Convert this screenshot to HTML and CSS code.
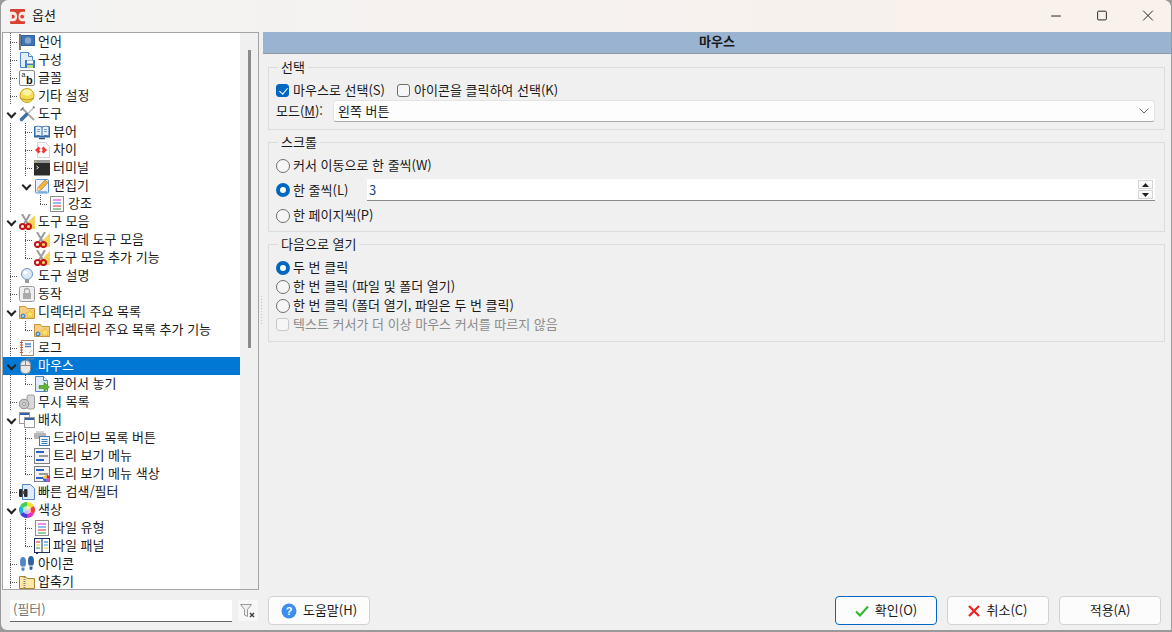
FILE: index.html
```html
<!DOCTYPE html>
<html lang="ko">
<head>
    <meta charset="UTF-8">
    <meta name="viewport" content="width=device-width, initial-scale=1.0">
    <title>옵션</title>
    <link rel="stylesheet" href="styles.css">
</head>
<body>
    <!-- Icon set for the tree, all 16x16 -->
    <svg class="defs" width="0" height="0">
        <symbol id="flag" viewBox="0 0 16 16"><rect x="0" y="0" width="2" height="16" fill="#777"/><rect x="2" y="1" width="14" height="11" fill="#2f62a3"/><rect x="3" y="2" width="12" height="9" fill="#3f74b5"/><circle cx="9" cy="6.500" r="3.200" fill="#86a9d2"/></symbol>
        <symbol id="config" viewBox="0 0 16 16"><path d="M1.500.5h8l4 4v11h-12z" fill="#e4eefa" stroke="#4f86c6"/><path d="M9.500.5v4h4" fill="#fff" stroke="#4f86c6"/><rect x="6" y="8" width="10" height="8" fill="#3f7cc0"/><rect x="8" y="8.500" width="6" height="3" fill="#fff"/><rect x="8" y="13" width="6" height="3" fill="#b9e07f"/></symbol>
        <symbol id="helmet" viewBox="0 0 16 16"><circle cx="8" cy="7.500" r="7" fill="#f6dc50" stroke="#c2a422"/><ellipse cx="8" cy="4.500" rx="4.500" ry="3" fill="#fdf3a6"/><path d="M1 10.500q7 3 14 0" fill="none" stroke="#b89a1e"/></symbol>
        <symbol id="tools" viewBox="0 0 16 16"><path d="M3 2l12 12" stroke="#a6a6a6" stroke-width="2"/><path d="M1 4l1 1 3-3-1-1z" fill="#777"/><path d="M15.500 1l-7 7" stroke="#bcbcbc" stroke-width="1.500"/><path d="M14 .5l1.500 1.500" stroke="#777" stroke-width="1.500"/><path d="M7.500 8.500l-5 5" stroke="#3d6ea8" stroke-width="3.500" stroke-linecap="round"/></symbol>
        <symbol id="book" viewBox="0 0 16 16"><path d="M0 2.500q4-1.500 8 0q4-1.500 8 0v11h-16z" fill="#2f6aa8"/><path d="M1.500 3q3.500-1 6 .5v8.500q-2.500-1.500-6-.5zM14.500 3q-3.500-1-6 .5v8.500q2.500-1.500 6-.5z" fill="#e9f1f8"/><path d="M3 5.500h3M3 7.500h3M10 5.500h3M10 7.500h3" stroke="#7e9cbc"/><path d="M5 14.500h6" stroke="#244f80" stroke-width="1.500"/></symbol>
        <symbol id="diff" viewBox="0 0 16 16"><path d="M3.500.5h8l4 4v11h-12z" fill="#fafafa" stroke="#d2d2d2"/><path d="M4.500 4.500l-3.500 3.500l3.500 3.500l2-2l-1.500-1.500l1.500-1.500zM9.500 4.500l3.500 3.500l-3.500 3.500l-2-2l1.500-1.500l-1.500-1.500z" fill="#ee3b3b"/></symbol>
        <symbol id="term" viewBox="0 0 16 16"><rect width="16" height="15" y=".5" fill="#2b2b2b"/><rect y=".5" width="16" height="2.500" fill="#9a9a9a"/><rect x="1" y="1" width="2" height="1" fill="#d9b13b"/><path d="M2.500 6l2 1.500l-2 1.500" stroke="#eee" fill="none"/></symbol>
        <symbol id="editor" viewBox="0 0 16 16"><rect x="1.500" y="1.500" width="13" height="13.500" rx="1" fill="#eaf2fb" stroke="#5a93d0"/><path d="M4 14h9" stroke="#67a8e0" stroke-width="1.500"/><path d="M3 13l1-3.500l7-7.500l3 2.500l-7 7.500z" fill="#f4b63f" stroke="#a8772a" stroke-width=".7"/><path d="M3 13l1-3.500l2.500 2.300z" fill="#f7dfb5"/></symbol>
        <symbol id="list" viewBox="0 0 16 16"><rect x="1.500" y=".5" width="13" height="15" fill="#fff" stroke="#8d8d8d"/><path d="M4 4h8" stroke="#e01fd0"/><path d="M4 7h8" stroke="#1f7fe0"/><path d="M4 10h8" stroke="#e02020"/><path d="M4 13h8" stroke="#2a9a3a"/></symbol>
        <symbol id="scissors" viewBox="0 0 16 16"><path d="M16 1v14h-14z" fill="#f5d65a"/><path d="M3 0l6 10M11 0l-6 10" stroke="#9b9b9b" stroke-width="2"/><circle cx="3.500" cy="12.500" r="2.600" fill="none" stroke="#c4161c" stroke-width="2"/><circle cx="9.500" cy="12.500" r="2.600" fill="none" stroke="#c4161c" stroke-width="2"/></symbol>
        <symbol id="bulb" viewBox="0 0 16 16"><circle cx="8" cy="6" r="5.500" fill="#dceaf8" stroke="#6c93bd"/><circle cx="6.500" cy="4.500" r="2" fill="#fff"/><rect x="6" y="11.500" width="4" height="3.500" fill="#9b9b9b"/></symbol>
        <symbol id="lock" viewBox="0 0 16 16"><rect x=".5" y=".5" width="15" height="15" rx="2" fill="#efefef" stroke="#9a9a9a"/><rect x="4" y="7" width="8" height="6" fill="#aaa"/><path d="M5.500 7v-2a2.500 2.500 0 0 1 5 0v2" fill="none" stroke="#aaa" stroke-width="1.300"/></symbol>
        <symbol id="folderstar" viewBox="0 0 16 16"><path d="M.5 2.500h6l1.500 2h7.500v10h-15z" fill="#f7cf80" stroke="#c9923a"/><path d="M11 6l1.300 2.700l3 .4l-2.200 2l.6 3l-2.700-1.500l-2.700 1.500l.6-3l-2.200-2l3-.4z" fill="#fbe26a" stroke="#d9a52b" stroke-width=".5"/><circle cx="4" cy="12" r="2.500" fill="#4a8ac8"/><circle cx="4" cy="12" r="1" fill="#cfe3f6"/></symbol>
        <symbol id="log" viewBox="0 0 16 16"><rect x="2.500" y=".5" width="12" height="15" fill="#fdfdfd" stroke="#a98a6a"/><path d="M1 2.500h3M1 5h3M1 7.500h3M1 10h3M1 12.500h3" stroke="#c0563c"/><path d="M6 4h6M6 6.500h6" stroke="#4f86c6" stroke-width="1.300"/><path d="M10 13l3-3" stroke="#bbb"/></symbol>
        <symbol id="mouse" viewBox="0 0 16 16"><rect x="1.500" y="2.500" width="10" height="13" rx="4" fill="#e8e8e8" stroke="#8a8a8a"/><path d="M1.500 7.500h10M6.500 2.500v5" stroke="#8a8a8a"/><path d="M6.500 2.500q1-2 4-1.500t5-1" fill="none" stroke="#888"/></symbol>
        <symbol id="drag" viewBox="0 0 16 16"><path d="M1.500.5h8l4 4v11h-12z" fill="#e4eefa" stroke="#4f86c6"/><path d="M9.500.5v4h4" fill="#fff" stroke="#4f86c6"/><path d="M5 9.500h5v-3l5.500 4.500l-5.500 4.500v-3h-5z" fill="#63b23c" stroke="#3e8a20" stroke-width=".6"/></symbol>
        <symbol id="disks" viewBox="0 0 16 16"><rect x="8" y="1" width="7.500" height="14" rx="2" fill="#d9d9d9" stroke="#9a9a9a"/><circle cx="5" cy="10" r="4.800" fill="#c9c9c9" stroke="#8c8c8c"/><circle cx="5" cy="10" r="1.500" fill="#fff" stroke="#8c8c8c"/></symbol>
        <symbol id="batch" viewBox="0 0 16 16"><rect x=".5" y=".5" width="10" height="11" fill="#fff" stroke="#9a9a9a"/><rect x="1" y="1" width="9" height="2" fill="#2f62a3"/><rect x="5.500" y="5.500" width="10" height="10" fill="#fff" stroke="#9a9a9a"/><rect x="6" y="6" width="9" height="2" fill="#2f62a3"/></symbol>
        <symbol id="drive" viewBox="0 0 16 16"><rect x="0" y="3" width="12" height="6" rx="1" fill="#b5b5b5"/><rect x="2" y="1" width="8" height="2" fill="#d4d4d4"/><rect x="5.500" y="6.500" width="10" height="9" fill="#eef4fb" stroke="#3f78b8"/><path d="M7.500 9.500h6M7.500 11.500h6M7.500 13.500h6" stroke="#3f78b8"/></symbol>
        <symbol id="treemenu" viewBox="0 0 16 16"><rect x=".5" y=".5" width="15" height="15" fill="#f4f4f4" stroke="#7f7f7f"/><rect x="2" y="3" width="8" height="2" fill="#2f62c0"/><rect x="5" y="7" width="9" height="2" fill="#9a9a9a"/><rect x="2" y="11" width="8" height="2" fill="#2f62c0"/></symbol>
        <symbol id="treecolor" viewBox="0 0 16 16"><use href="#treemenu"/><path d="M12.500 12.500v-3.500a3.500 3.500 0 0 1 3.500 3.500z" fill="#e02030"/><path d="M12.500 12.500h3.500a3.500 3.500 0 0 1-3.500 3.500z" fill="#e040d0"/><path d="M12.500 12.500v3.500a3.500 3.500 0 0 1-3.500-3.500z" fill="#3060e0"/><path d="M12.500 12.500h-3.500a3.500 3.500 0 0 1 3.500-3.500z" fill="#f0d020"/></symbol>
        <symbol id="binoc" viewBox="0 0 16 16"><path d="M3.500.5h8l4 4v11h-12z" fill="#dfeafa" stroke="#4f86c6"/><rect x="0" y="5" width="3.500" height="8" rx="1" fill="#2b2b2b"/><rect x="5" y="5" width="3.500" height="8" rx="1" fill="#2b2b2b"/><rect x="3" y="7" width="2.500" height="3" fill="#555"/></symbol>
        <symbol id="wheel" viewBox="0 0 16 16"><path d="M8 8v-8a8 8 0 0 1 6.900 4z" fill="#f2e030"/><path d="M8 8l6.900-4a8 8 0 0 1 0 8z" fill="#f04040"/><path d="M8 8l6.900 4a8 8 0 0 1-6.900 4z" fill="#e030c0"/><path d="M8 8v8a8 8 0 0 1-6.900-4z" fill="#4040e0"/><path d="M8 8l-6.900 4a8 8 0 0 1 0-8z" fill="#20b0e0"/><path d="M8 8l-6.900-4a8 8 0 0 1 6.900-4z" fill="#40d050"/><circle cx="8" cy="8" r="4" fill="#fff" fill-opacity=".65"/></symbol>
        <symbol id="panel" viewBox="0 0 16 16"><rect x=".5" y=".5" width="15" height="14" fill="#fff" stroke="#1f2a5c"/><path d="M8 1v13" stroke="#1f2a5c"/><path d="M2 4h4" stroke="#e02020"/><path d="M2 7h4" stroke="#e0d020"/><path d="M2 10h4" stroke="#20a030"/><path d="M10 4h4" stroke="#2060e0"/><path d="M10 7h4" stroke="#20b0e0"/><path d="M10 10h4" stroke="#e0d020"/><path d="M2 15.500h2" stroke="#1f2a5c"/></symbol>
        <symbol id="feet" viewBox="0 0 16 16"><path d="M1 6q0-5 3-5t3 5q0 3-1 4.500h-4q-1-1.500-1-4.500zM2.500 11.500h3v2.500q-1.500 2-3 0z" fill="#4f86c6"/><path d="M9 5q0-5 3-5t3 5q0 3-1 4.500h-4q-1-1.500-1-4.500zM10.500 10.500h3v2.500q-1.500 2-3 0z" fill="#2f62a3"/></symbol>
        <symbol id="zip" viewBox="0 0 16 16"><path d="M.5 2.500h6l1.500 2h7.500v10h-15z" fill="#fbe7a8" stroke="#a8842e"/><path d="M5.500 3v11" stroke="#888" stroke-dasharray="1 1" stroke-width="2"/></symbol>
    </svg>

    <div class="window">
        <div class="titlebar">
            <svg class="app-icon" viewBox="0 0 16 16"><rect width="16" height="16" rx="1" fill="#d8412f"/><path d="M0 3h3.500q4 0 4 5t-4 5h-3.500z" fill="#fbe9e4"/><path d="M16 3h-3q-4 0-4 5t4 5h3z" fill="#fbe9e4"/><path d="M2 6h1q2 0 2 2t-2 2h-1z" fill="#d8412f"/><circle cx="13" cy="8" r="2" fill="#d8412f"/></svg>
            <span class="title">옵션</span>
            <div class="win-btns">
                <svg viewBox="0 0 46 32"><path d="M18 15.500h10" stroke="#222"/></svg>
                <svg viewBox="0 0 46 32"><rect x="18.500" y="10.500" width="9" height="9" rx="1" fill="none" stroke="#222"/></svg>
                <svg viewBox="0 0 46 32"><path d="M18 10l10 10M28 10l-10 10" stroke="#222"/></svg>
            </div>
        </div>

        <div class="main">
            <div class="sidebar">
                <div class="tree">
                    <div class="tree-list">
                        <div class="row"><i class="g tee"></i><svg class="ic"><use href="#flag"/></svg><span>언어</span></div>
                        <div class="row"><i class="g tee"></i><svg class="ic"><use href="#config"/></svg><span>구성</span></div>
                        <div class="row"><i class="g tee"></i><svg class="ic" viewBox="0 0 16 16"><rect x=".5" y=".5" width="15" height="15" rx="1.500" fill="#fff" stroke="#8a8a8a"/><text x="2.500" y="6.500" class="ic-a">a</text><text x="7" y="14" class="ic-b">b</text></svg><span>글꼴</span></div>
                        <div class="row"><i class="g tee"></i><svg class="ic"><use href="#helmet"/></svg><span>기타 설정</span></div>
                        <div class="row"><i class="g chev"></i><svg class="ic"><use href="#tools"/></svg><span>도구</span></div>
                        <div class="row"><i class="g line"></i><i class="g tee"></i><svg class="ic"><use href="#book"/></svg><span>뷰어</span></div>
                        <div class="row"><i class="g line"></i><i class="g tee"></i><svg class="ic"><use href="#diff"/></svg><span>차이</span></div>
                        <div class="row"><i class="g line"></i><i class="g tee"></i><svg class="ic"><use href="#term"/></svg><span>터미널</span></div>
                        <div class="row"><i class="g line"></i><i class="g chev"></i><svg class="ic"><use href="#editor"/></svg><span>편집기</span></div>
                        <div class="row"><i class="g line"></i><i class="g"></i><i class="g ell"></i><svg class="ic"><use href="#list"/></svg><span>강조</span></div>
                        <div class="row"><i class="g chev"></i><svg class="ic"><use href="#scissors"/></svg><span>도구 모음</span></div>
                        <div class="row"><i class="g line"></i><i class="g tee"></i><svg class="ic"><use href="#scissors"/></svg><span>가운데 도구 모음</span></div>
                        <div class="row"><i class="g line"></i><i class="g ell"></i><svg class="ic"><use href="#scissors"/></svg><span>도구 모음 추가 기능</span></div>
                        <div class="row"><i class="g tee"></i><svg class="ic"><use href="#bulb"/></svg><span>도구 설명</span></div>
                        <div class="row"><i class="g tee"></i><svg class="ic"><use href="#lock"/></svg><span>동작</span></div>
                        <div class="row"><i class="g chev"></i><svg class="ic"><use href="#folderstar"/></svg><span>디렉터리 주요 목록</span></div>
                        <div class="row"><i class="g line"></i><i class="g ell"></i><svg class="ic"><use href="#folderstar"/></svg><span>디렉터리 주요 목록 추가 기능</span></div>
                        <div class="row"><i class="g tee"></i><svg class="ic"><use href="#log"/></svg><span>로그</span></div>
                        <div class="row selected"><i class="g chev"></i><svg class="ic"><use href="#mouse"/></svg><span>마우스</span></div>
                        <div class="row"><i class="g line"></i><i class="g ell"></i><svg class="ic"><use href="#drag"/></svg><span>끌어서 놓기</span></div>
                        <div class="row"><i class="g tee"></i><svg class="ic"><use href="#disks"/></svg><span>무시 목록</span></div>
                        <div class="row"><i class="g chev"></i><svg class="ic"><use href="#batch"/></svg><span>배치</span></div>
                        <div class="row"><i class="g line"></i><i class="g tee"></i><svg class="ic"><use href="#drive"/></svg><span>드라이브 목록 버튼</span></div>
                        <div class="row"><i class="g line"></i><i class="g tee"></i><svg class="ic"><use href="#treemenu"/></svg><span>트리 보기 메뉴</span></div>
                        <div class="row"><i class="g line"></i><i class="g ell"></i><svg class="ic"><use href="#treecolor"/></svg><span>트리 보기 메뉴 색상</span></div>
                        <div class="row"><i class="g tee"></i><svg class="ic"><use href="#binoc"/></svg><span>빠른 검색/필터</span></div>
                        <div class="row"><i class="g chev"></i><svg class="ic"><use href="#wheel"/></svg><span>색상</span></div>
                        <div class="row"><i class="g line"></i><i class="g tee"></i><svg class="ic"><use href="#list"/></svg><span>파일 유형</span></div>
                        <div class="row"><i class="g line"></i><i class="g ell"></i><svg class="ic"><use href="#panel"/></svg><span>파일 패널</span></div>
                        <div class="row"><i class="g tee"></i><svg class="ic"><use href="#feet"/></svg><span>아이콘</span></div>
                        <div class="row"><i class="g tee"></i><svg class="ic"><use href="#zip"/></svg><span>압축기</span></div>
                    </div>
                    <div class="scrollbar"><div class="thumb"></div></div>
                </div>
            </div>
            <div class="splitter"></div>
            <div class="content">
                <div class="page-head">마우스</div>
                <div class="groups">
                    <fieldset class="group group-select">
                        <legend>선택</legend>
                        <div class="check-row">
                            <label class="opt opt-first"><span class="check checked"></span>마우스로 선택(S)</label>
                            <label class="opt"><span class="check"></span>아이콘을 클릭하여 선택(K)</label>
                        </div>
                        <div class="mode-row">
                            <span class="mode-label">모드(<u>M</u>):</span>
                            <div class="combo">왼쪽 버튼
                                <svg class="combo-arrow" viewBox="0 0 10 6"><path d="M.5.5l4.500 4.500l4.500-4.500" fill="none" stroke="#666"/></svg>
                            </div>
                        </div>
                    </fieldset>

                    <fieldset class="group group-scroll">
                        <legend>스크롤</legend>
                        <label class="opt"><span class="radio"></span>커서 이동으로 한 줄씩(W)</label>
                        <div class="spin-row">
                            <label class="opt opt-fixed"><span class="radio on"></span>한 줄씩(L)</label>
                            <div class="spin">3
                                <div class="spin-btns">
                                    <span class="spin-btn"><svg viewBox="0 0 7 4"><path d="M3.500 0l3.500 4h-7z" fill="#222"/></svg></span>
                                    <span class="spin-btn"><svg viewBox="0 0 7 4"><path d="M3.500 4l3.500-4h-7z" fill="#222"/></svg></span>
                                </div>
                            </div>
                        </div>
                        <label class="opt"><span class="radio"></span>한 페이지씩(P)</label>
                    </fieldset>

                    <fieldset class="group group-open">
                        <legend>다음으로 열기</legend>
                        <label class="opt"><span class="radio on"></span>두 번 클릭</label>
                        <label class="opt"><span class="radio"></span>한 번 클릭 (파일 및 폴더 열기)</label>
                        <label class="opt"><span class="radio"></span>한 번 클릭 (폴더 열기, 파일은 두 번 클릭)</label>
                        <label class="opt disabled"><span class="check"></span>텍스트 커서가 더 이상 마우스 커서를 따르지 않음</label>
                    </fieldset>
                </div>
            </div>
        </div>

        <div class="footer">
            <div class="filter-input">(필터)</div>
            <div class="filter-btn">
                <svg viewBox="0 0 16 16" width="16" height="16"><path d="M.5 1.500h11l-4 5v7l-3-1.500v-5.500z" fill="#eee" stroke="#999"/><path d="M10 10l4 4M14 10l-4 4" stroke="#444" stroke-width="1.500"/></svg>
            </div>
            <button class="btn btn-help">
                <svg viewBox="0 0 16 16" width="16" height="16"><circle cx="8" cy="8" r="7.500" fill="#3f8cf0"/><text x="8" y="12" class="ic-help">?</text></svg>
                도움말(H)
            </button>
            <div class="spacer"></div>
            <button class="btn btn-default">
                <svg viewBox="0 0 14 12" width="14" height="12"><path d="M1 6.500l4 4l8-9" fill="none" stroke="#2db52d" stroke-width="2"/></svg>
                확인(O)
            </button>
            <button class="btn">
                <svg viewBox="0 0 12 12" width="12" height="12"><path d="M1 1l10 10M11 1l-10 10" stroke="#ee2222" stroke-width="2.200"/></svg>
                취소(C)
            </button>
            <button class="btn">적용(A)</button>
        </div>
    </div>
</body>
</html>
```

FILE: styles.css
```css
* {
    box-sizing: border-box;
}

html, body {
    margin: 0;
    height: 100%;
    overflow: hidden;
}

body {
    background: #9a9a9a;
    font-family: "Noto Sans CJK KR", "Noto Sans", sans-serif;
    font-size: 13px;
    color: #1a1a1a;
}

.defs {
    position: absolute;
}

.ic-a {
    font: 7px "Liberation Sans", sans-serif;
    fill: #222;
}

.ic-b {
    font: bold 11px "Liberation Sans", sans-serif;
    fill: #111;
}

.ic-help {
    font: bold 11px "Liberation Sans", sans-serif;
    fill: #fff;
    text-anchor: middle;
}

.window {
    height: 630px;
    margin: 0 1px;
    background: #f0f0f0;
    border-radius: 8px 8px 0 6px;
    display: flex;
    flex-direction: column;
    overflow: hidden;
}

/* Title bar */
.titlebar {
    height: 32px;
    flex: none;
    display: flex;
    align-items: center;
    padding-left: 9px;
    background: linear-gradient(to right, #f3f3f3, #f8f1ec 85%);
}

.app-icon {
    width: 15px;
    height: 15px;
}

.title {
    margin: -3px 0 0 7px;
}

.win-btns {
    margin-left: auto;
    display: flex;
}

.win-btns svg {
    width: 46px;
    height: 31px;
}

.main {
    flex: 1;
    display: flex;
    min-height: 0;
}

/* Tree on the left */
.sidebar {
    width: 259px;
    flex: none;
    padding-left: 1px;
    padding-right: 1px;
}

.tree {
    height: 558px;
    display: flex;
    border: 1px solid #a4a4a4;
    overflow: hidden;
}

.tree-list {
    flex: 1;
    background: #fff;
    overflow: hidden;
}

.scrollbar {
    width: 18px;
    flex: none;
    background: #f0f0f0;
    padding: 17px 0 0 8px;
}

.thumb {
    width: 3px;
    height: 298px;
    background: #8a8a8a;
}

.row {
    height: 18px;
    display: flex;
    align-items: center;
    white-space: nowrap;
}

.row span {
    line-height: 16px;
    margin-top: -3px;
}

.row.selected {
    background: #0078d4;
    color: #fff;
}

.g {
    width: 15px;
    height: 18px;
    flex: none;
    display: block;
    background-repeat: no-repeat;
}

.line {
    background-image: repeating-linear-gradient(to bottom, #555 0 1px, transparent 1px 2px);
    background-size: 1px 18px;
    background-position: 7px 0;
}

.tee {
    background-image: repeating-linear-gradient(to bottom, #555 0 1px, transparent 1px 2px), repeating-linear-gradient(to right, #555 0 1px, transparent 1px 2px);
    background-size: 1px 18px, 8px 1px;
    background-position: 7px 0, 7px 9px;
}

.ell {
    background-image: repeating-linear-gradient(to bottom, #555 0 1px, transparent 1px 2px), repeating-linear-gradient(to right, #555 0 1px, transparent 1px 2px);
    background-size: 1px 10px, 8px 1px;
    background-position: 7px 0, 7px 9px;
}

/* expanded node marker, drawn with two borders */
.chev {
    position: relative;
}

.chev::after {
    content: "";
    position: absolute;
    left: 5px;
    top: 5px;
    width: 5px;
    height: 5px;
    border-right: 2px solid #222;
    border-bottom: 2px solid #222;
    transform: rotate(45deg);
}

.ic {
    width: 16px;
    height: 16px;
    flex: none;
    margin: 0 3px 0 1px;
}

/* Splitter between tree and page, with its grip dots */
.splitter {
    width: 3px;
    flex: none;
    background-image: repeating-linear-gradient(to bottom, #c4c4c4 0 1px, transparent 1px 3px);
    background-size: 1px 30px;
    background-position: 1px 50%;
    background-repeat: no-repeat;
}

/* Page on the right */
.content {
    flex: 1;
    min-width: 0;
}

.page-head {
    height: 22px;
    background: #9ab3d0;
    border-bottom: 1px solid #8f9aa6;
    text-align: center;
    font-weight: 700;
    line-height: 18px;
}

.groups {
    padding: 5px 6px 0 5px;
}

.group {
    margin: 0 0 4px;
    padding: 0 9px 0 7px;
    border: 1px solid #dcdcdc;
    min-width: 0;
}

.group legend {
    padding: 0 3px;
    margin-left: 2px;
    line-height: 16px;
}

.group-select {
    height: 71px;
}

.group-scroll {
    height: 98px;
    padding-top: 6px;
}

.group-open {
    height: 106px;
    padding-top: 6px;
}

.check-row {
    display: flex;
    margin-top: 6px;
}

/* text sits a pixel above the box centre, the marks stay centred */
.opt {
    display: flex;
    align-items: center;
    height: 19px;
    padding-bottom: 2px;
    white-space: nowrap;
}

.opt-first {
    width: 121px;
    flex: none;
}

.opt-fixed {
    width: 91px;
    flex: none;
}

.disabled {
    color: #8c8c8c;
}

.check {
    width: 13px;
    height: 13px;
    flex: none;
    margin: 2px 4px 0 0;
    border: 1px solid #6e6e6e;
    border-radius: 3px;
    background: #f6f6f6;
    position: relative;
}

.disabled .check {
    border-color: #c8c8c8;
}

.check.checked {
    background: #0067c0;
    border-color: #0067c0;
}

.check.checked::after {
    content: "";
    position: absolute;
    left: 3.5px;
    top: 1px;
    width: 4px;
    height: 7px;
    border-right: 1px solid #fff;
    border-bottom: 1px solid #fff;
    transform: rotate(40deg);
}

.radio {
    width: 14px;
    height: 14px;
    flex: none;
    margin: 2px 3px 0 0;
    border: 1px solid #6e6e6e;
    border-radius: 50%;
    background: #f6f6f6;
}

.radio.on {
    background: #fff;
    border: 4px solid #0067c0;
}

.mode-row {
    display: flex;
    align-items: center;
}

.mode-label {
    width: 57px;
    flex: none;
    margin-top: -2px;
}

.combo {
    flex: 1;
    height: 22px;
    display: flex;
    align-items: center;
    justify-content: space-between;
    padding: 0 5px 2px 4px;
    background: #fdfdfd;
    border: 1px solid #e4e4e4;
    border-bottom-color: #a8a8a8;
    border-radius: 3px;
}

.combo-arrow {
    width: 10px;
    height: 6px;
    margin-top: 2px;
}

.spin-row {
    display: flex;
    align-items: center;
    margin: 4px 0 5px;
}

.spin {
    flex: 1;
    height: 22px;
    display: flex;
    align-items: center;
    justify-content: space-between;
    padding-left: 2px;
    background: #fff;
    color: #1f3f8f;
    border-bottom: 1px solid #8a8a8a;
}

.spin-btns {
    display: flex;
    flex-direction: column;
    gap: 1px;
    padding-right: 2px;
}

.spin-btn {
    width: 15px;
    height: 9px;
    display: flex;
    align-items: center;
    justify-content: center;
    background: #fbfbfb;
    border: 1px solid #d4d4d4;
}

.spin-btn svg {
    width: 7px;
    height: 4px;
}

/* Bottom button row */
.footer {
    height: 40px;
    flex: none;
    display: flex;
    align-items: center;
    padding: 1px 10px 0 9px;
}

.filter-input {
    width: 222px;
    height: 22px;
    padding-left: 3px;
    line-height: 18px;
    background: #fff;
    color: #777;
    border-bottom: 1px solid #666;
}

.filter-btn {
    width: 20px;
    height: 21px;
    margin-left: 6px;
    display: flex;
    align-items: center;
    justify-content: center;
    background: #f8f8f8;
    border-radius: 3px;
}

.btn {
    width: 102px;
    height: 29px;
    display: flex;
    align-items: center;
    justify-content: center;
    gap: 6px;
    margin-left: 10px;
    padding: 0 0 2px;
    font: inherit;
    color: inherit;
    background: #fcfcfc;
    border: 1px solid #d2d2d2;
    border-radius: 4px;
}

.btn svg {
    margin-top: 2px;
}

.btn-default {
    border: 1.5px solid #0067c0;
}

.spacer {
    flex: 1;
}
```
